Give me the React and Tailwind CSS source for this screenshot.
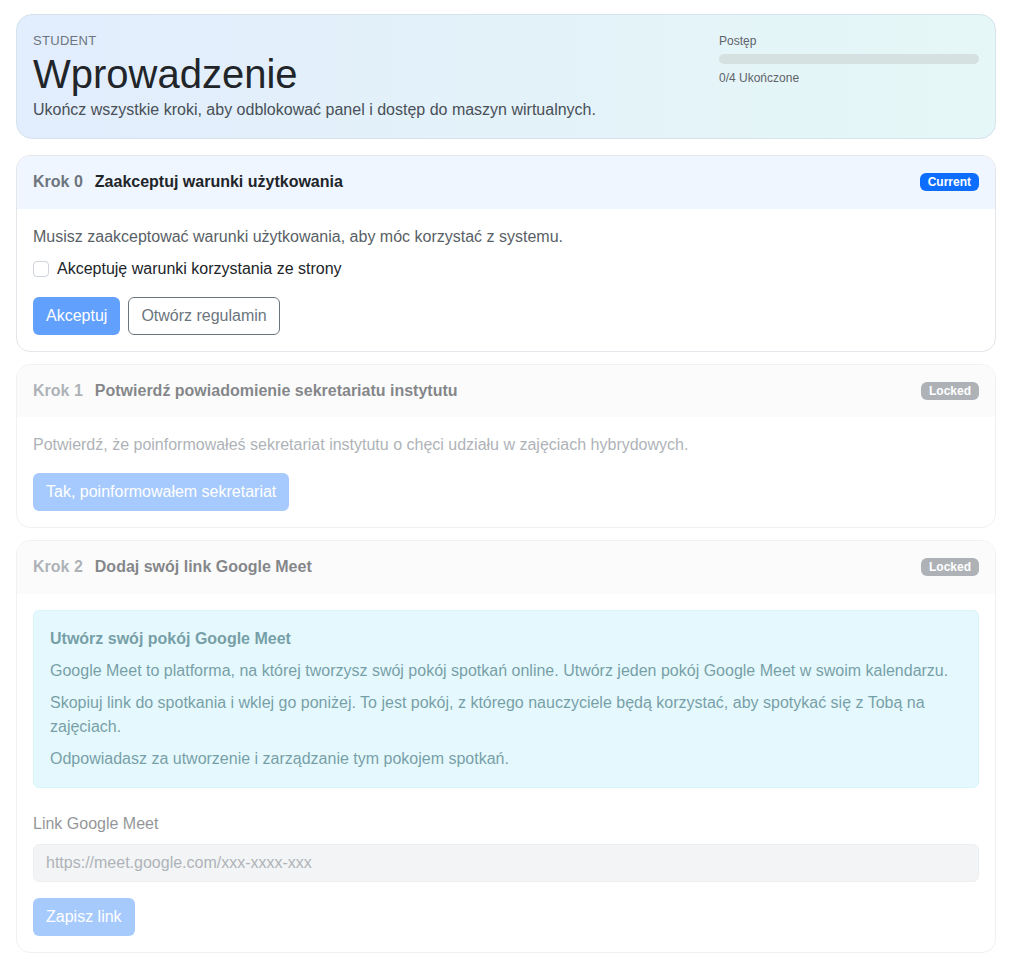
import React from 'react'

function Badge({ children, tone }) {
  const cls = tone === 'current' ? 'bg-[#0d6efd]' : 'bg-[#6c757d]'
  return (
    <span className={`${cls} text-white text-[12px] font-bold leading-3 px-2 py-[3px] rounded-md`}>
      {children}
    </span>
  )
}

function StepCard({ num, title, status, children }) {
  const locked = status === 'locked'
  return (
    <div className={`border border-[#e3e6ea] rounded-[14px] overflow-hidden bg-white ${locked ? 'opacity-[0.55]' : ''}`}>
      <div className={`flex items-center justify-between px-4 h-[52.5px] ${locked ? 'bg-[#f8f9fa]' : 'bg-[#f0f6ff]'}`}>
        <div className="flex items-center gap-3 leading-5 font-bold">
          <span className="text-[#6c757d]">Krok {num}</span>
          <span className="text-[#212529]">{title}</span>
        </div>
        <Badge tone={locked ? 'locked' : 'current'}>{locked ? 'Locked' : 'Current'}</Badge>
      </div>
      <div className="p-4">{children}</div>
    </div>
  )
}

function Button({ children, outline }) {
  if (outline) {
    return (
      <button className="h-[38px] px-3 border border-[#6c757d] text-[#6c757d] rounded-md bg-white">
        {children}
      </button>
    )
  }
  return (
    <button className="h-[38px] px-3 border border-transparent text-white rounded-md bg-[#0d6efd] opacity-65">
      {children}
    </button>
  )
}

export default function App() {
  return (
    <div className="min-h-screen bg-white font-['Liberation_Sans',Arial,sans-serif] text-[16px] text-[#212529]">
      <div className="w-[980px] ml-4 pt-[14px] pb-4">
        <div className="flex justify-between border border-[#d4e3ec] rounded-[16px] bg-gradient-to-r from-[#e2edfd] to-[#e5f7f6] px-4 py-4">
          <div>
            <div className="text-[13px] leading-[19px] text-[#6c757d] uppercase tracking-[0.3px]">Student</div>
            <h1 className="text-[40px] leading-[48px] text-[#212529]">Wprowadzenie</h1>
            <p className="text-[#495057] leading-6">Ukończ wszystkie kroki, aby odblokować panel i dostęp do maszyn wirtualnych.</p>
          </div>
          <div className="w-[260px] pt-[1px]">
            <div className="text-[12px] leading-[18px] text-[#5f6368]">Postęp</div>
            <div className="h-[10px] rounded-full bg-[#d5e1e1] mt-[4px]"></div>
            <div className="text-[12px] leading-[18px] text-[#5f6368] mt-[5px]">0/4 Ukończone</div>
          </div>
        </div>

        <div className="flex flex-col gap-3 mt-4">
          <StepCard num={0} title="Zaakceptuj warunki użytkowania" status="current">
            <p className="leading-6 text-[#595f66]">Musisz zaakceptować warunki użytkowania, aby móc korzystać z systemu.</p>
            <label className="flex items-center gap-2 mt-2 leading-6">
              <span className="w-4 h-4 border border-[#ced4da] rounded-[4px] bg-white"></span>
              <span>Akceptuję warunki korzystania ze strony</span>
            </label>
            <div className="flex gap-2 mt-4">
              <Button>Akceptuj</Button>
              <Button outline>Otwórz regulamin</Button>
            </div>
          </StepCard>

          <StepCard num={1} title="Potwierdź powiadomienie sekretariatu instytutu" status="locked">
            <p className="leading-6 text-[#6c757d]">Potwierdź, że poinformowałeś sekretariat instytutu o chęci udziału w zajęciach hybrydowych.</p>
            <div className="flex mt-4">
              <Button>Tak, poinformowałem sekretariat</Button>
            </div>
          </StepCard>

          <StepCard num={2} title="Dodaj swój link Google Meet" status="locked">
            <div className="border border-[#b6eefa] bg-[#cff4fc] text-[#055160] rounded-md px-4 py-4 leading-6">
              <div className="font-bold">Utwórz swój pokój Google Meet</div>
              <p className="mt-2">Google Meet to platforma, na której tworzysz swój pokój spotkań online. Utwórz jeden pokój Google Meet w swoim kalendarzu.</p>
              <p className="mt-2">Skopiuj link do spotkania i wklej go poniżej. To jest pokój, z którego nauczyciele będą korzystać, aby spotykać się z Tobą na zajęciach.</p>
              <p className="mt-2">Odpowiadasz za utworzenie i zarządzanie tym pokojem spotkań.</p>
            </div>
            <div className="mt-6 leading-6 text-[#3a3f44]">Link Google Meet</div>
            <input
              disabled
              placeholder="https://meet.google.com/xxx-xxxx-xxx"
              className="mt-2 w-full h-[38px] px-3 border border-[#dee2e6] rounded-md bg-[#e9ecef] placeholder:text-[#6c757d]"
            />
            <div className="flex mt-4">
              <Button>Zapisz link</Button>
            </div>
          </StepCard>
        </div>
      </div>
    </div>
  )
}
